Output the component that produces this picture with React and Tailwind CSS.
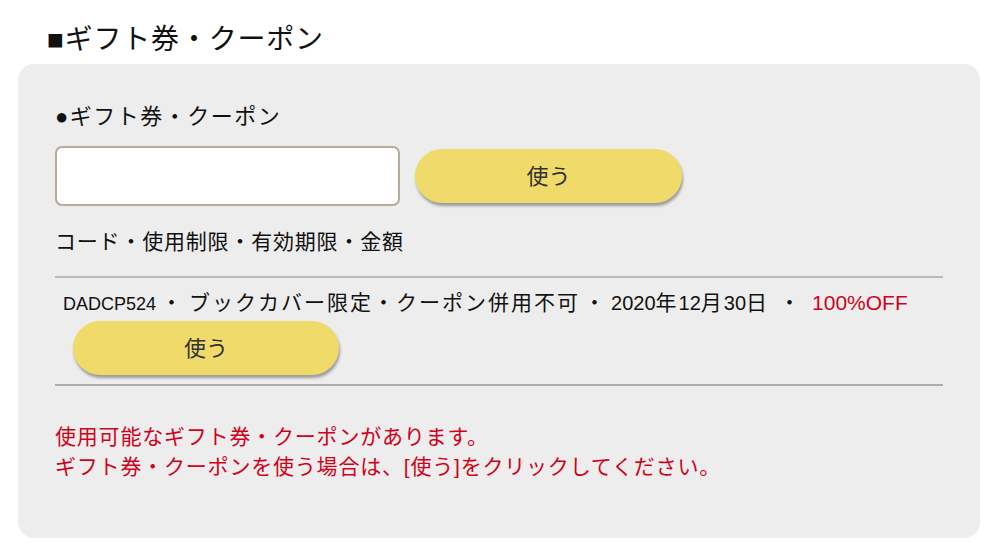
export default function App() {
  const font = { fontFamily: '"Liberation Sans", "Noto Sans CJK JP", sans-serif' };
  return (
    <div className="w-[1000px] h-[554px] bg-white text-[#111] overflow-hidden" style={font}>
      <div className="pt-[26px] pl-[47px] h-[28px] box-content text-[28px] leading-[28px] tracking-[0.8px] whitespace-nowrap">
        ■ギフト券・クーポン
      </div>
      <div className="mt-[10px] ml-[18px] w-[962px] h-[474px] rounded-[16px] bg-[#ededed] pt-[41px] px-[37px]">
        <div className="text-[22px] leading-[24px] h-[24px] tracking-[1.5px] whitespace-nowrap">●ギフト券・クーポン</div>
        <div className="mt-[17px] flex items-center gap-[15px]">
          <div className="w-[345px] h-[60px] bg-white border-2 border-[#b5ab98] rounded-[7px]" />
          <button className="w-[267px] h-[54px] rounded-full bg-[#f0db6a] text-[22px] text-[#333] shadow-[1px_3px_3px_rgba(0,0,0,0.35)]">
            使う
          </button>
        </div>
        <div className="mt-[24px] text-[21px] leading-[24px] h-[24px] tracking-[0.8px] whitespace-nowrap">
          コード・使用制限・有効期限・金額
        </div>
        <div className="mt-[22px] h-[2px] bg-[#b9b9b9]" />
        <div className="mt-[13px] pl-[8px] leading-[24px] h-[24px] whitespace-nowrap flex items-baseline">
          <span className="text-[18px]">DADCP524</span>
          <span className="text-[21px] tracking-[2px] mx-[5px]">・</span>
          <span className="text-[21px] tracking-[2px]">ブックカバー限定・クーポン併用不可</span>
          <span className="text-[21px] tracking-[2px] mx-[4px]">・</span>
          <span className="text-[20px]">2020</span>
          <span className="text-[21px] tracking-[2px]">年</span>
          <span className="text-[20px]">12</span>
          <span className="text-[21px] tracking-[2px]">月</span>
          <span className="text-[20px]">30</span>
          <span className="text-[21px] tracking-[2px]">日</span>
          <span className="text-[21px] tracking-[2px] mx-[10px]">・</span>
          <span className="text-[21px] text-[#d0021b]">100%OFF</span>
        </div>
        <div className="mt-[6px] pl-[18px]">
          <button className="w-[266px] h-[54px] rounded-full bg-[#f0db6a] text-[22px] text-[#333] shadow-[1px_3px_3px_rgba(0,0,0,0.35)]">
            使う
          </button>
        </div>
        <div className="mt-[9px] h-[2px] bg-[#adadad]" />
        <div className="mt-[36px] text-[21px] leading-[30px] tracking-[0.8px] text-[#d0021b] whitespace-nowrap">
          <div>使用可能なギフト券・クーポンがあります。</div>
          <div>ギフト券・クーポンを使う場合は、[使う]をクリックしてください。</div>
        </div>
      </div>
    </div>
  );
}
